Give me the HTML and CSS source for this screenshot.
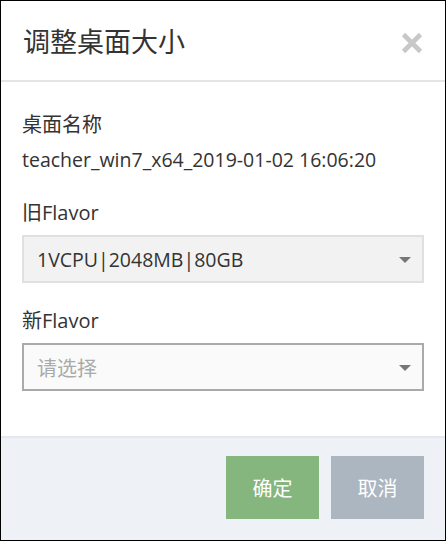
FILE: index.html
```html
<!DOCTYPE html>
<html lang="zh-CN">
<head>
<meta charset="utf-8">
<link rel="stylesheet" href="styles.css">
</head>
<body>
<div class="modal">
  <div class="modal-header">
    <h1 class="modal-title">调整桌面大小</h1>
    <span class="close" aria-label="关闭">
      <svg width="22" height="22" viewBox="0 0 22 22"><path d="M2.5 2.5 L19.5 19.5 M19.5 2.5 L2.5 19.5" stroke="#c8c8c8" stroke-width="4.6" stroke-linecap="butt"/></svg>
    </span>
  </div>
  <div class="modal-body">
    <div class="label first">桌面名称</div>
    <div class="value">teacher_win7_x64_2019-01-02 16:06:20</div>
    <div class="label second">旧Flavor</div>
    <div class="select disabled">
      <span class="select-text">1VCPU|2048MB|80GB</span>
      <span class="caret"></span>
    </div>
    <div class="label third">新Flavor</div>
    <div class="select active">
      <span class="select-text placeholder">请选择</span>
      <span class="caret"></span>
    </div>
  </div>
  <div class="modal-footer">
    <button class="btn btn-ok">确定</button>
    <button class="btn btn-cancel">取消</button>
  </div>
</div>
</body>
</html>
```
FILE: styles.css
```css
html, body {
  margin: 0;
  padding: 0;
  background: #fff;
}
body {
  font-family: "Open Sans", "Noto Sans CJK SC", sans-serif;
  color: #333;
}
.modal {
  width: 446px;
  height: 541px;
  box-sizing: border-box;
  border: 1px solid #000;
  display: flex;
  flex-direction: column;
  background: #fff;
}
.modal-header {
  height: 81px;
  box-sizing: border-box;
  border-bottom: 2px solid #e5e5e5;
  display: flex;
  align-items: center;
  justify-content: space-between;
  padding: 0 22px 0 22px;
  flex-shrink: 0;
}
.modal-title {
  margin: 0;
  font-family: "Noto Sans CJK SC", sans-serif;
  font-weight: 400;
  font-size: 27px;
  color: #333;
  line-height: 32px;
}
.close {
  display: flex;
  width: 22px;
  height: 22px;
  align-items: center;
  justify-content: center;
  margin-top: 4px;
}
.modal-body {
  flex: 1;
  padding: 28px 21px 0 21px;
}
.label {
  font-family: "Open Sans", "Noto Sans CJK SC", sans-serif;
  font-size: 20px;
  line-height: 30px;
  color: #333;
}
.value {
  margin-top: 5px;
  font-size: 19.5px;
  line-height: 30px;
  color: #333;
}
.label.second {
  margin-top: 23px;
}
.label.third {
  margin-top: 23px;
}
.select {
  margin-top: 7px;
  height: 48px;
  box-sizing: border-box;
  display: flex;
  align-items: center;
  justify-content: space-between;
  padding: 0 11px 0 13px;
}
.select.disabled {
  background: #f2f2f2;
  border: 2px solid #e0e0e0;
}
.select.active {
  background: #fafafa;
  border: 2px solid #aaa;
}
.select-text {
  font-size: 19.5px;
  color: #333;
}
.select-text.placeholder {
  font-family: "Noto Sans CJK SC", sans-serif;
  font-size: 20px;
  color: #aaa;
}
.caret {
  width: 0;
  height: 0;
  border-left: 6px solid transparent;
  border-right: 6px solid transparent;
  border-top: 6px solid #777;
  margin-top: 2px;
}
.modal-footer {
  height: 104px;
  box-sizing: border-box;
  border-top: 2px solid #e4e8ee;
  background: #eef1f5;
  display: flex;
  justify-content: flex-end;
  align-items: flex-start;
  gap: 12px;
  padding: 18px 21px 0 0;
  flex-shrink: 0;
}
.btn {
  width: 93px;
  height: 63px;
  border: none;
  color: #fff;
  font-family: "Noto Sans CJK SC", sans-serif;
  font-size: 20px;
  padding: 0;
}
.btn-ok {
  background: #85b67d;
}
.btn-cancel {
  background: #abb6c0;
}
```
